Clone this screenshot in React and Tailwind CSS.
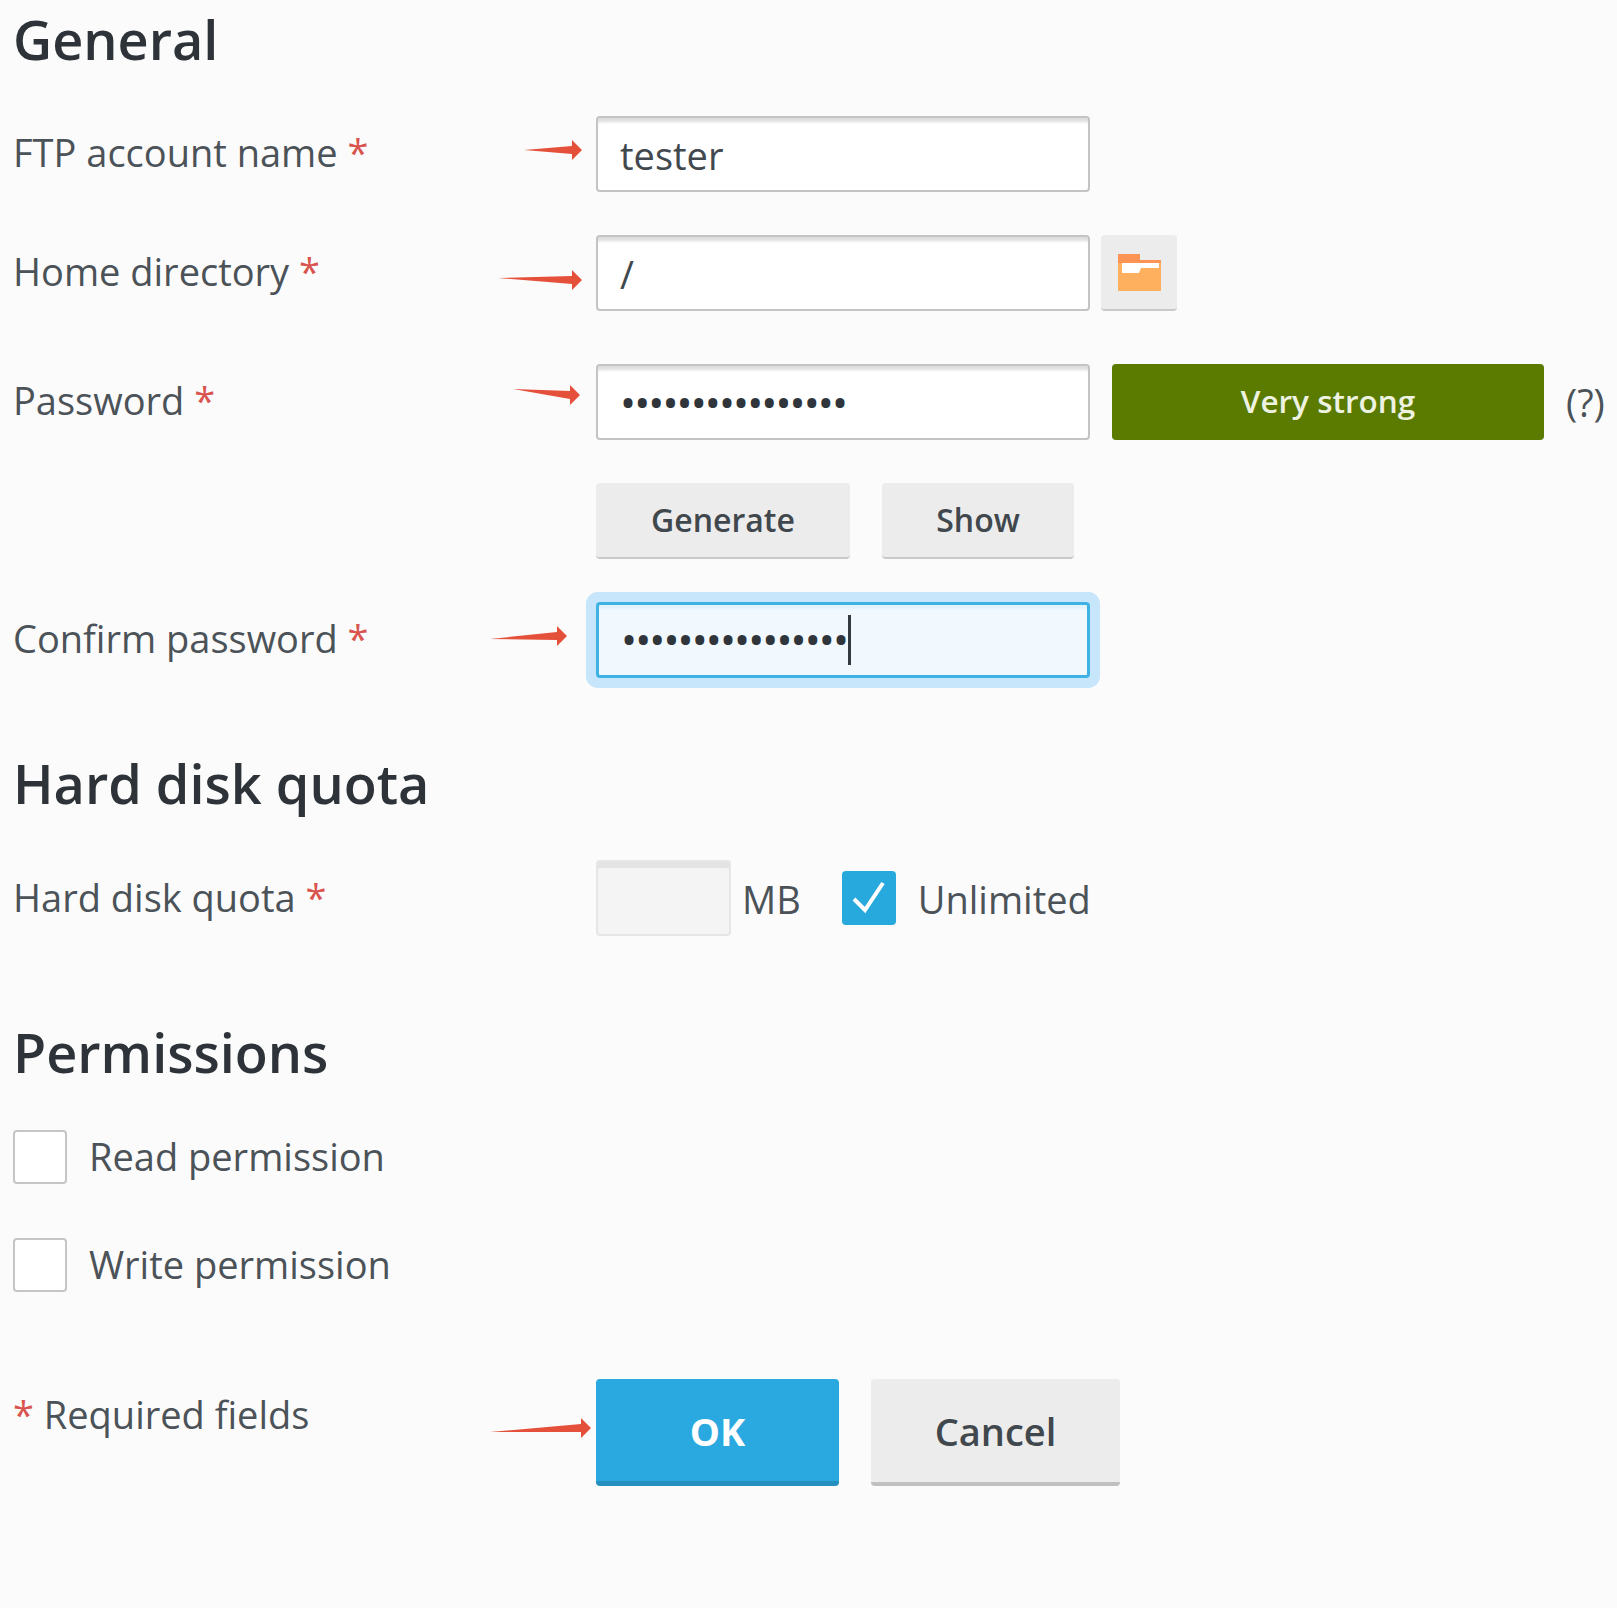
import React from "react";

const Star = () => <span className="text-[#d9534f]">*</span>;

const Arrow = ({ w, tail, className }) => (
	<svg width={w} height="20" viewBox={`0 0 ${w} 20`} className={`absolute ${className}`}>
		<path d={`M0 ${tail} L${w - 10} 6 V0 L${w} 10 L${w - 10} 20 V14 Z`} fill="#e5503a" />
	</svg>
);

const Label = ({ children, className = "pb-[4px]" }) => (
	<div className={`w-[583px] shrink-0 text-[38px] leading-[48px] text-[#4b5258] ${className}`}>{children}</div>
);

const Input = ({ children, className = "" }) => (
	<div className={`w-[494px] h-[76px] flex items-center pl-[22px] pt-[2px] bg-white border-2 border-[#c4c4c4] rounded-[4px] text-[38px] text-[#41484e] shadow-[inset_0_6px_3px_-2px_#dedede] ${className}`}>
		{children}
	</div>
);

const Heading = ({ children, className = "" }) => (
	<h2 className={`text-[54px] leading-[64px] font-semibold text-[#2d3338] ${className}`}>{children}</h2>
);

const Dots = ({ className = "" }) => (
	<span className={`ml-[2px] text-[32px] tracking-[2.1px] font-bold text-[#2f353a] ${className}`}>••••••••••••••••</span>
);

const Check = ({ label, className = "" }) => (
	<div className={`flex items-center gap-[22px] ${className}`}>
		<div className="w-[54px] h-[54px] bg-white border-2 border-[#c5c5c5] rounded-[4px]"></div>
		<span className="text-[38px] text-[#4b5258]">{label}</span>
	</div>
);

const App = () => {
	return (
		<div className="relative w-[1617px] h-[1608px] overflow-hidden bg-[#fbfbfb] pl-[13px] pt-[7px] font-['Open_Sans',sans-serif]">
			<Heading>General</Heading>

			<div className="flex items-center mt-[45px]">
				<Label>FTP account name <Star /></Label>
				<Input>tester</Input>
			</div>

			<div className="flex items-center mt-[43px]">
				<Label>Home directory <Star /></Label>
				<Input>/</Input>
				<div className="w-[76px] h-[76px] ml-[11px] flex items-center justify-center bg-[#ececec] border-b-2 border-[#c9c9c9] rounded-[4px]">
					<svg width="43" height="37" viewBox="0 0 43 37">
						<path d="M0 0 H22 V6 H43 V37 H0 Z" fill="#ffb05f" />
						<path d="M0 0 H22 V6 H43 V9 H0 Z" fill="#fd9355" />
						<path d="M4 9 H41 V14 H23 L21 19 H4 Z" fill="#ffffff" />
					</svg>
				</div>
			</div>

			<div className="flex items-center mt-[53px]">
				<Label>Password <Star /></Label>
				<Input><Dots /></Input>
				<div className="w-[432px] h-[76px] ml-[22px] pb-[2px] flex items-center justify-center bg-[#5a7a00] rounded-[4px] text-[31.5px] font-semibold text-[#eef2e0]">Very strong</div>
				<span className="ml-[22px] text-[38px] text-[#4b5258]">(?)</span>
			</div>

			<div className="flex mt-[43px] ml-[583px] gap-8">
				<div className="w-[254px] h-[76px] flex items-center justify-center bg-[#ececec] border-b-2 border-[#c9c9c9] rounded-[4px] text-[32px] font-semibold text-[#40474d]">Generate</div>
				<div className="w-[192px] h-[76px] flex items-center justify-center bg-[#ececec] border-b-2 border-[#c9c9c9] rounded-[4px] text-[32px] font-semibold text-[#40474d]">Show</div>
			</div>

			<div className="flex items-center mt-[43px]">
				<Label>Confirm password <Star /></Label>
				<Input className="!pt-0 !bg-[#f1f9ff] !border-[3px] !border-[#3fb2e4] !shadow-[inset_0_6px_3px_-2px_#e0f2fc,0_0_0_10px_#c8e6fb]">
					<Dots />
					<span className="w-[3px] h-[50px] bg-[#333a40] -ml-[1px]"></span>
				</Input>
			</div>

			<Heading className="mt-[73px]">Hard disk quota</Heading>

			<div className="flex items-center mt-[45px]">
				<Label className="pb-[2px]">Hard disk quota <Star /></Label>
				<div className="w-[135px] h-[76px] bg-[#f4f4f4] border-2 border-[#e6e6e6] rounded-[4px] shadow-[inset_0_6px_0_0_#e3e3e3]"></div>
				<span className="ml-[11px] pt-[2px] text-[38px] text-[#4b5258]">MB</span>
				<div className="ml-[41px] w-[54px] h-[54px] bg-[#28a9de] rounded-[4px]">
					<svg width="54" height="54" viewBox="0 0 54 54" fill="none">
						<path d="M12 28 L23 39 L41 12" stroke="#ffffff" strokeWidth="4" />
					</svg>
				</div>
				<span className="ml-[22px] pt-[2px] text-[38px] text-[#4b5258]">Unlimited</span>
			</div>

			<Heading className="mt-[84px]">Permissions</Heading>

			<Check label="Read permission" className="mt-[44px]" />
			<Check label="Write permission" className="mt-[51px]" />

			<div className="flex items-start mt-[86px]">
				<div className="w-[583px] shrink-0 mt-[11px] text-[38px] leading-[48px] text-[#4b5258]"><Star /> Required fields</div>
				<div className="w-[243px] h-[107px] pt-[2px] flex items-center justify-center bg-[#29a9df] border-b-[5px] border-[#2590bf] rounded-[4px] text-[38px] font-bold text-white">OK</div>
				<div className="ml-8 w-[249px] h-[107px] pt-[2px] flex items-center justify-center bg-[#ececec] border-b-[4px] border-[#c0c0c0] rounded-[4px] text-[38px] font-semibold text-[#40474d]">Cancel</div>
			</div>

			<Arrow w={58} tail={10} className="left-[524px] top-[140px]" />
			<Arrow w={84} tail={8} className="left-[498px] top-[270px]" />
			<Arrow w={67} tail={4} className="left-[513px] top-[385px]" />
			<Arrow w={77} tail={13} className="left-[490px] top-[626px]" />
			<Arrow w={101} tail={14} className="left-[490px] top-[1418px]" />
		</div>
	);
};

export default App;
